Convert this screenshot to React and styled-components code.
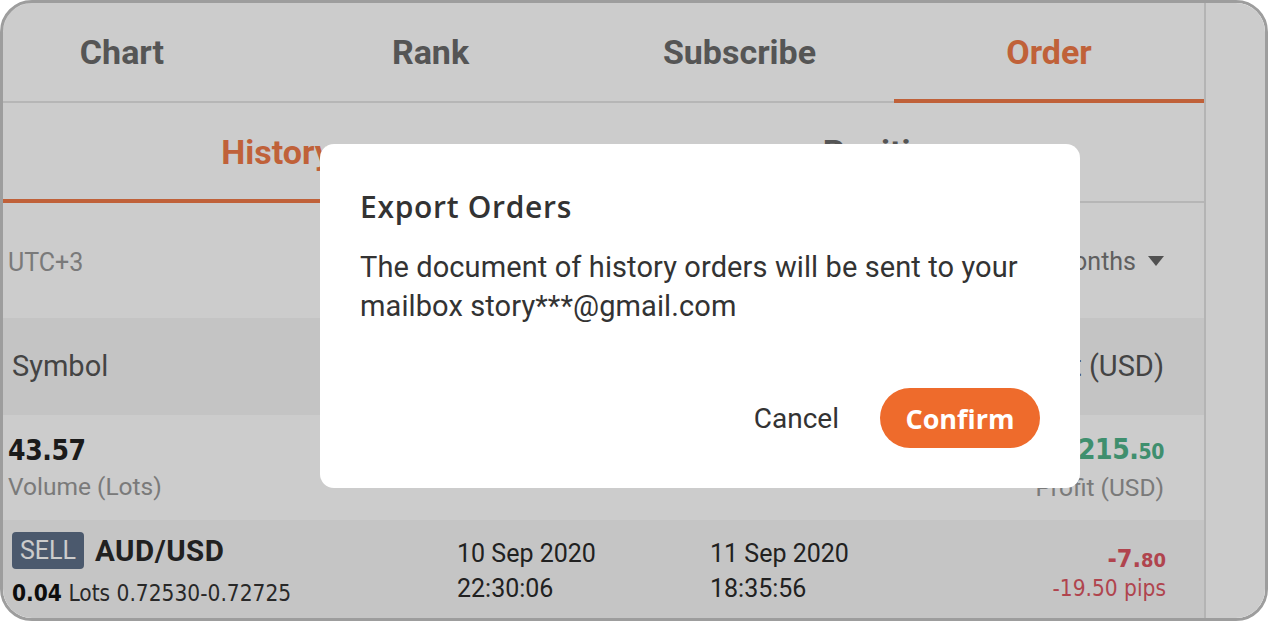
import React from "react";
import styled, { createGlobalStyle } from "styled-components";

const Global = createGlobalStyle`
  html, body { margin: 0; padding: 0; background: #ffffff; }
  body { font-family: Roboto, "Liberation Sans", sans-serif; }
  * { box-sizing: border-box; }
`;

const ORANGE = "#f07a48";
const NUM = `"DejaVu Sans Condensed", "DejaVu Sans", sans-serif`;
const DISPLAY = `"Open Sans", Roboto, sans-serif`;

const Frame = styled.div`
  position: relative;
  width: 1268px;
  height: 621px;
  border: 3px solid #9d9d9d;
  border-radius: 32px;
  overflow: hidden;
  display: flex;
  background: #ffffff;
`;

const Main = styled.div`
  flex: 0 0 1201px;
  display: flex;
  flex-direction: column;
  overflow: hidden;
`;

const Side = styled.div`
  flex: 1;
  border-left: 2px solid #e2e2e2;
  background: #ffffff;
`;

const TabBar = styled.div`
  display: grid;
  grid-template-columns: ${(p) => p.$cols};
  height: 100px;
  border-bottom: 2px solid #e4e4e4;
  flex: 0 0 auto;
`;

const Tab = styled.div`
  display: flex;
  align-items: center;
  justify-content: center;
  padding-right: ${(p) => p.$pr || 0}px;
  font-size: 34px;
  font-weight: 700;
  color: ${(p) => (p.$active ? ORANGE : "#6b6b6b")};
  position: relative;
  &::after {
    content: "";
    display: ${(p) => (p.$active ? "block" : "none")};
    position: absolute;
    left: 0;
    right: 0;
    bottom: -2px;
    height: 4px;
    background: ${ORANGE};
  }
`;

const FilterRow = styled.div`
  height: 115px;
  display: flex;
  align-items: center;
  justify-content: space-between;
  padding: 4px 40px 0 5px;
  font-size: 25px;
  color: #999999;
  flex: 0 0 auto;
`;

const Dropdown = styled.div`
  display: flex;
  align-items: center;
  gap: 12px;
  font-size: 25px;
  color: #777777;
  margin-top: -3px;
`;

const Caret = styled.span`
  width: 0;
  height: 0;
  border-left: 8px solid transparent;
  border-right: 8px solid transparent;
  border-top: 10px solid #666666;
`;

const HeaderRow = styled.div`
  height: 97px;
  background: #f5f5f5;
  display: flex;
  align-items: center;
  justify-content: space-between;
  padding: 0 40px 2px 9px;
  font-size: 29px;
  color: #555555;
  flex: 0 0 auto;
`;

const SummaryRow = styled.div`
  height: 105px;
  display: flex;
  align-items: center;
  justify-content: space-between;
  padding: 3px 40px 0 5px;
  flex: 0 0 auto;
`;

const Stat = styled.div`
  display: flex;
  flex-direction: column;
  align-items: ${(p) => (p.$right ? "flex-end" : "flex-start")};
`;

const BigNum = styled.div`
  font-family: ${NUM};
  font-weight: 700;
  font-size: 28px;
  letter-spacing: -0.4px;
  line-height: 36px;
  color: ${(p) => p.$color || "#222222"};
`;

const Cents = styled.span`
  font-size: ${(p) => p.$size || 21}px;
`;

const Caption = styled.div`
  font-size: 24.5px;
  line-height: 36px;
  color: #999999;
`;

const OrderRow = styled.div`
  flex: 1;
  background: #f7f7f7;
  display: grid;
  grid-template-columns: 445px 253px 1fr auto;
  align-items: center;
  padding: 3px 38px 0 9px;
`;

const Cell = styled.div`
  display: flex;
  flex-direction: column;
  align-items: ${(p) => (p.$right ? "flex-end" : "flex-start")};
  gap: ${(p) => p.$gap || 0}px;
  margin-top: ${(p) => p.$mt || 0}px;
`;

const SymbolLine = styled.div`
  display: flex;
  align-items: center;
  gap: 11px;
`;

const Badge = styled.span`
  background: #5e7089;
  color: #ffffff;
  font-size: 25px;
  line-height: 37px;
  padding: 0 8px;
  border-radius: 4px;
`;

const Pair = styled.span`
  font-size: 29.5px;
  font-weight: 700;
  letter-spacing: 0.5px;
  color: #2a2a2a;
`;

const LotsLine = styled.div`
  font-family: ${NUM};
  font-size: 22.5px;
  line-height: 32px;
  color: #333333;
  b { font-weight: 700; color: #111111; }
`;

const DateText = styled.div`
  font-size: 25px;
  line-height: 35px;
  color: #2a2a2a;
`;

const Loss = styled.div`
  font-family: ${NUM};
  font-weight: 700;
  font-size: 25px;
  line-height: 28px;
  color: #dc5662;
`;

const Pips = styled.div`
  font-family: ${NUM};
  font-size: 22.5px;
  line-height: 28px;
  color: #dc5662;
`;

const Overlay = styled.div`
  position: absolute;
  inset: 0;
  background: rgba(0, 0, 0, 0.2);
`;

const Modal = styled.div`
  position: absolute;
  left: 317px;
  top: 141px;
  width: 760px;
  height: 344px;
  background: #ffffff;
  border-radius: 14px;
  padding: 42px 40px 40px 40px;
  display: flex;
  flex-direction: column;
  font-family: Roboto, "Liberation Sans", sans-serif;
`;

const Title = styled.div`
  font-family: ${DISPLAY};
  font-size: 30px;
  font-weight: 600;
  letter-spacing: 0.7px;
  color: #333333;
  line-height: 42px;
`;

const Body = styled.div`
  margin-top: 20px;
  font-size: 29px;
  letter-spacing: 0.1px;
  line-height: 39px;
  color: #333333;
`;

const Actions = styled.div`
  margin-top: auto;
  display: flex;
  justify-content: flex-end;
  align-items: center;
  gap: 41px;
`;

const TextButton = styled.button`
  border: none;
  background: none;
  padding: 0;
  font-family: inherit;
  font-size: 28px;
  color: #333333;
`;

const PrimaryButton = styled.button`
  border: none;
  width: 160px;
  height: 60px;
  border-radius: 30px;
  background: #ee6b2c;
  color: #ffffff;
  font-family: ${DISPLAY};
  font-size: 27px;
  font-weight: 700;
`;

export default function App() {
  return (
    <>
      <Global />
      <Frame>
        <Main>
          <TabBar $cols="273px 309px 309px 310px">
            <Tab $pr={35}>Chart</Tab>
            <Tab>Rank</Tab>
            <Tab>Subscribe</Tab>
            <Tab $active>Order</Tab>
          </TabBar>
          <TabBar $cols="582px 619px">
            <Tab $pr={35} $active>History</Tab>
            <Tab>Positions</Tab>
          </TabBar>
          <FilterRow>
            <span>UTC+3</span>
            <Dropdown>
              3 Months <Caret />
            </Dropdown>
          </FilterRow>
          <HeaderRow>
            <span>Symbol</span>
            <span>Profit (USD)</span>
          </HeaderRow>
          <SummaryRow>
            <Stat>
              <BigNum>43.57</BigNum>
              <Caption>Volume (Lots)</Caption>
            </Stat>
            <Stat $right>
              <BigNum $color="#4fb38a">
                +1,215.<Cents>50</Cents>
              </BigNum>
              <Caption>Profit (USD)</Caption>
            </Stat>
          </SummaryRow>
          <OrderRow>
            <Cell $gap={8}>
              <SymbolLine>
                <Badge>SELL</Badge>
                <Pair>AUD/USD</Pair>
              </SymbolLine>
              <LotsLine>
                <b>0.04</b> Lots 0.72530-0.72725
              </LotsLine>
            </Cell>
            <Cell>
              <DateText>10 Sep 2020</DateText>
              <DateText>22:30:06</DateText>
            </Cell>
            <Cell>
              <DateText>11 Sep 2020</DateText>
              <DateText>18:35:56</DateText>
            </Cell>
            <Cell $right $mt={6}>
              <Loss>
                -7.<Cents $size={20}>80</Cents>
              </Loss>
              <Pips>-19.50 pips</Pips>
            </Cell>
          </OrderRow>
        </Main>
        <Side />
        <Overlay />
        <Modal>
          <Title>Export Orders</Title>
          <Body>
            The document of history orders will be sent to your
            <br />
            mailbox story***@gmail.com
          </Body>
          <Actions>
            <TextButton>Cancel</TextButton>
            <PrimaryButton>Confirm</PrimaryButton>
          </Actions>
        </Modal>
      </Frame>
    </>
  );
}
